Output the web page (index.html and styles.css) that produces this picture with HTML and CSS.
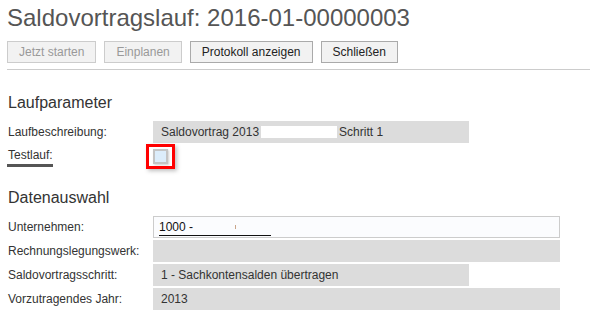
FILE: index.html
```html
<!DOCTYPE html>
<html>
<head>
    <title>Saldovortragslauf</title>
    <meta charset="utf-8">
    <link rel="stylesheet" href="styles.css">
</head>
<body>
    <div class="page">
        <h1 class="page-title">Saldovortragslauf: 2016-01-00000003</h1>

        <!-- Toolbar -->
        <div class="toolbar">
            <button class="btn" disabled>Jetzt starten</button>
            <button class="btn" disabled>Einplanen</button>
            <button class="btn">Protokoll anzeigen</button>
            <button class="btn">Schließen</button>
        </div>

        <!-- Laufparameter -->
        <h2 class="section-title first">Laufparameter</h2>
        <div class="form-row">
            <div class="label">Laufbeschreibung:</div>
            <div class="field short">Saldovortrag 2013<span class="blank"></span>Schritt 1</div>
        </div>
        <div class="form-row check-row">
            <div class="label"><span class="label-link">Testlauf:</span></div>
            <div class="check-wrap">
                <div class="checkbox"></div>
            </div>
        </div>

        <!-- Datenauswahl -->
        <h2 class="section-title">Datenauswahl</h2>
        <div class="form-row">
            <div class="label">Unternehmen:</div>
            <div class="field input"><span class="company">1000 - <span class="tick"></span></span></div>
        </div>
        <div class="form-row">
            <div class="label">Rechnungslegungswerk:</div>
            <div class="field"></div>
        </div>
        <div class="form-row">
            <div class="label">Saldovortragsschritt:</div>
            <div class="field short">1 - Sachkontensalden übertragen</div>
        </div>
        <div class="form-row">
            <div class="label">Vorzutragendes Jahr:</div>
            <div class="field">2013</div>
        </div>
    </div>
</body>
</html>
```

FILE: styles.css
```css
body {
    margin: 0;
    background: #fff;
    font-family: "Liberation Sans", Arial, sans-serif;
    color: #333;
}
.page {
    padding: 4px 0 0 7px;
}
.page-title {
    margin: 0;
    font-size: 24px;
    font-weight: normal;
    line-height: 28px;
    color: #555;
}
.toolbar {
    display: flex;
    gap: 8px;
    margin-top: 9px;
    padding-bottom: 6px;
    border-bottom: 1px solid #ccc;
    margin-right: 1px;
}
.btn {
    height: 22px;
    padding: 0 11px;
    font-family: inherit;
    font-size: 12px;
    color: #222;
    background: #f2f2f2;
    border: 1px solid #aaa;
    border-radius: 0;
}
.btn:disabled {
    color: #999;
    border-color: #ccc;
}
.section-title {
    margin: 19px 0 0 1px;
    font-size: 16px;
    font-weight: normal;
    line-height: 20px;
    color: #333;
}
.section-title.first {
    margin-top: 23px;
}
.form-row {
    display: flex;
    align-items: center;
    height: 22px;
    margin-top: 2px;
}
.section-title + .form-row {
    margin-top: 8px;
}
.label {
    width: 145px;
    flex-shrink: 0;
    padding-left: 1px;
    font-size: 12px;
}
.label-link {
    display: inline-block;
    border-bottom: 3px solid #555;
    padding-bottom: 2px;
    margin-left: -1px;
    padding-left: 1px;
}
.field {
    box-sizing: border-box;
    width: 407px;
    height: 22px;
    line-height: 22px;
    padding-left: 8px;
    font-size: 12px;
    color: #333;
    background: #dcdcdc;
    white-space: nowrap;
}
.field.short {
    width: 316px;
}
.field.input {
    background: #fbfcfe;
    border: 1px solid #ccc;
    line-height: 20px;
    padding-left: 5px;
}
.blank {
    display: inline-block;
    width: 76px;
    height: 12px;
    margin: 0 2px 0 2px;
    vertical-align: -2px;
    background: #fff;
}
.company {
    display: inline-block;
    width: 112px;
    line-height: 15px;
    border-bottom: 1px solid #111;
    color: #111;
    position: relative;
}
.tick {
    position: absolute;
    left: 76px;
    top: 5px;
    width: 1px;
    height: 4px;
    background: #c9a58a;
}
.check-row {
    height: 25px;
    margin-top: 1px;
}
.check-row .label {
    align-self: flex-start;
    padding-top: 4px;
}
.check-wrap {
    box-sizing: border-box;
    width: 29px;
    height: 25px;
    margin-left: -7px;
    border: 3px solid #f00;
    display: flex;
    align-items: center;
    justify-content: center;
    box-shadow: 2px 2px 4px rgba(0, 0, 0, 0.25);
}
.checkbox {
    box-sizing: border-box;
    width: 15px;
    height: 15px;
    background: #dcedfb;
    border: 2px solid #c4c4c4;
    box-shadow: 1px 1px 2px rgba(0, 0, 0, 0.2);
}
```
